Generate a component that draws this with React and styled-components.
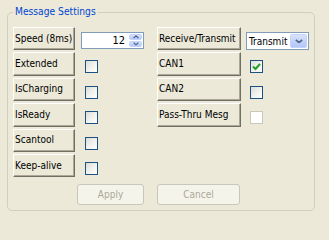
import React from "react";
import styled, { createGlobalStyle } from "styled-components";

const GlobalStyle = createGlobalStyle`
	html, body {
		margin: 0;
		padding: 0;
		background: #ece9d8;
	}
	body {
		font-family: "DejaVu Sans Condensed", "DejaVu Sans", sans-serif;
		font-stretch: condensed;
		font-size: 10px;
		color: #000000;
	}
`;

const Page = styled.div`
	width: 329px;
	height: 218px;
	padding: 12px 0 0 7px;
	box-sizing: border-box;
`;

const GroupBox = styled.div`
	position: relative;
	box-sizing: border-box;
	width: 308px;
	height: 199px;
	border: 1px solid #d0d0bf;
	border-radius: 5px;
	padding: 14px 0 0 5px;
`;

const GroupTitle = styled.div`
	position: absolute;
	top: -7px;
	left: 5px;
	padding: 0 2px;
	line-height: 12px;
	font-size: 10.2px;
	color: #0046d5;
	background: #ece9d8;
`;

const Form = styled.div`
	display: grid;
	grid-template-columns: 62px 82px 84px 1fr;
	grid-auto-rows: 23.4px;
	row-gap: 2px;
`;

const HeaderButton = styled.div`
	grid-column: ${(props) => props.col};
	box-sizing: border-box;
	display: flex;
	align-items: center;
	padding: 0 0 1px 1px;
	white-space: nowrap;
	overflow: hidden;
	background: #ece9d8;
	border-top: 1px solid #ffffff;
	border-left: 1px solid #ffffff;
	border-right: 1px solid #716f64;
	border-bottom: 1px solid #716f64;
	box-shadow: inset -1px -1px 0 #aca899;
`;

const Cell = styled.div`
	grid-column: ${(props) => props.col};
	display: flex;
	align-items: flex-start;
	padding-left: ${(props) => props.indent || "0px"};
	padding-top: ${(props) => props.top || "8px"};
`;

const Box = styled.div`
	box-sizing: border-box;
	width: 13px;
	height: 13px;
	border: 1px solid ${(props) => (props.disabled ? "#cac8bb" : "#1c5180")};
	background: ${(props) =>
		props.disabled
			? "#ffffff"
			: "linear-gradient(135deg, #dcdcd7 0%, #f2f2ef 55%, #ffffff 100%)"};
	display: flex;
	align-items: center;
	justify-content: center;
`;

const Field = styled.div`
	box-sizing: border-box;
	display: flex;
	align-items: stretch;
	width: ${(props) => props.width};
	height: ${(props) => props.height};
	border: 1px solid #7f9db9;
	background: #ffffff;
`;

const FieldText = styled.div`
	flex: 1;
	display: flex;
	align-items: center;
	justify-content: ${(props) => (props.right ? "flex-end" : "flex-start")};
	padding: ${(props) => (props.right ? "0 4px 0 0" : "0 0 0 2px")};
	font-size: ${(props) => (props.right ? "11px" : "10px")};
`;

const SpinColumn = styled.div`
	width: 13px;
	display: flex;
	flex-direction: column;
	gap: 1px;
	padding: 1px 1px 1px 0;
`;

const ArrowButton = styled.div`
	flex: 1;
	display: flex;
	align-items: center;
	justify-content: center;
	border-radius: 2px;
	background: linear-gradient(180deg, #d9e3fb 0%, #bfd0f8 60%, #b3c6f5 100%);
	border: 1px solid #c3d3fd;
`;

const DropButton = styled(ArrowButton)`
	flex: none;
	width: 15px;
	margin: 1px;
	border-radius: 2px;
`;

const ActionRow = styled.div`
	grid-column: ${(props) => props.col};
	margin-top: 5px;
	padding-left: ${(props) => props.indent || "0px"};
	display: flex;
`;

const DisabledButton = styled.div`
	box-sizing: border-box;
	width: ${(props) => props.width};
	height: 21px;
	display: flex;
	align-items: center;
	justify-content: center;
	border: 1px solid #c9c7ba;
	border-radius: 3px;
	background: #f5f4ea;
	color: #aca899;
`;

const Chevron = ({ up, size = 7 }) => (
	<svg width={size} height={size * 0.6} viewBox="0 0 10 6">
		<path
			d={up ? "M1 5 L5 1.5 L9 5" : "M1 1 L5 4.5 L9 1"}
			fill="none"
			stroke="#4d6185"
			strokeWidth="2"
		/>
	</svg>
);

const Check = () => (
	<svg width="9" height="9" viewBox="0 0 9 9">
		<path d="M1 4.5 L3.5 7 L8 2" fill="none" stroke="#21a121" strokeWidth="2" />
	</svg>
);

const leftRows = ["Extended", "IsCharging", "IsReady", "Scantool", "Keep-alive"];
const rightRows = [
	{ label: "CAN1", checked: true },
	{ label: "CAN2" },
	{ label: "Pass-Thru Mesg", disabled: true },
];

const App = () => {
	return (
		<Page>
			<GlobalStyle />
			<GroupBox>
				<GroupTitle>Message Settings</GroupTitle>
				<Form>
					<HeaderButton col="1">Speed (8ms)</HeaderButton>
					<Cell col="2" indent="6px" top="5px">
						<Field width="63px" height="17px">
							<FieldText right>12</FieldText>
							<SpinColumn>
								<ArrowButton>
									<Chevron up size={6} />
								</ArrowButton>
								<ArrowButton>
									<Chevron size={6} />
								</ArrowButton>
							</SpinColumn>
						</Field>
					</Cell>
					<HeaderButton col="3">Receive/Transmit</HeaderButton>
					<Cell col="4" indent="5px" top="5px">
						<Field width="63px" height="18px">
							<FieldText>Transmit</FieldText>
							<DropButton>
								<Chevron size={8} />
							</DropButton>
						</Field>
					</Cell>

					{leftRows.map((label, index) => {
						const right = rightRows[index];
						return (
							<React.Fragment key={label}>
								<HeaderButton col="1">{label}</HeaderButton>
								<Cell col="2" indent="10px">
									<Box />
								</Cell>
								{right && (
									<>
										<HeaderButton col="3">{right.label}</HeaderButton>
										<Cell col="4" indent="9px">
											<Box disabled={right.disabled}>{right.checked && <Check />}</Box>
										</Cell>
									</>
								)}
							</React.Fragment>
						);
					})}

					<ActionRow col="2" indent="2px">
						<DisabledButton width="67px">Apply</DisabledButton>
					</ActionRow>
					<ActionRow col="3">
						<DisabledButton width="83px">Cancel</DisabledButton>
					</ActionRow>
				</Form>
			</GroupBox>
		</Page>
	);
};

export default App;
